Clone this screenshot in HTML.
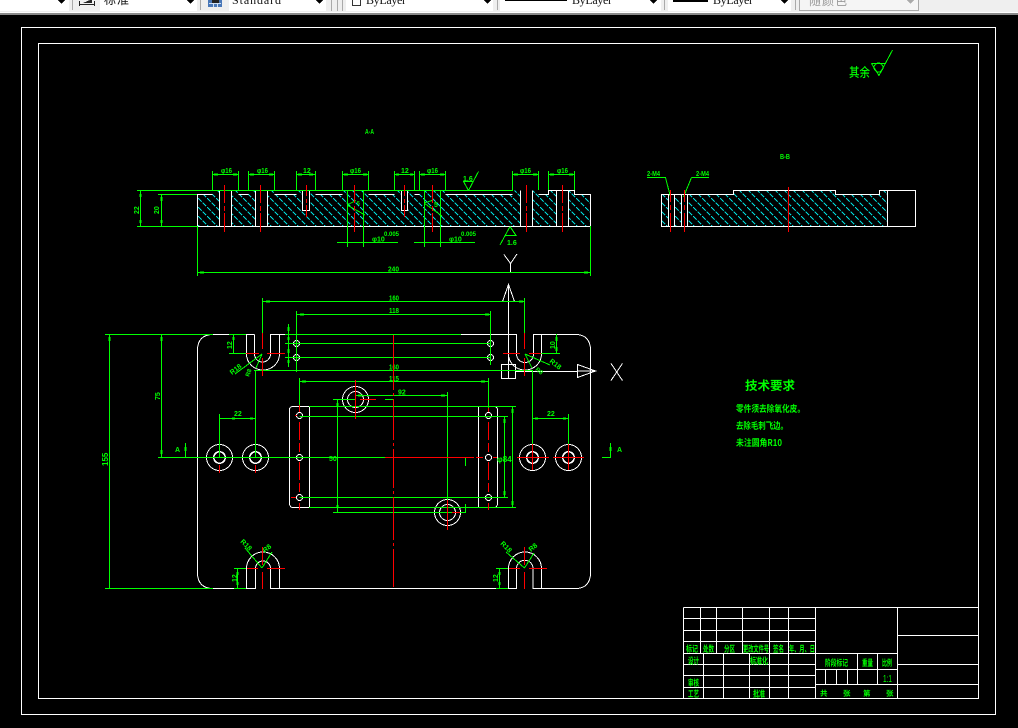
<!DOCTYPE html>
<html><head><meta charset="utf-8"><title>CAD</title>
<style>
html,body{margin:0;padding:0;background:#000;width:1018px;height:728px;overflow:hidden}
svg{display:block;position:absolute;left:0;top:0}
.g{fill:#0f0;font-family:"Liberation Sans","Noto Sans CJK SC",sans-serif;font-weight:700}
.c{fill:#0f0;font-family:"Noto Sans CJK SC","WenQuanYi Zen Hei",sans-serif;font-weight:700}
.t{fill:#111;font-family:"Liberation Serif","Noto Sans CJK SC",serif;font-size:12px}
</style></head><body>
<svg width="1018" height="728" viewBox="0 0 1018 728" xmlns="http://www.w3.org/2000/svg" shape-rendering="crispEdges">
<defs>
<pattern id="h" patternUnits="userSpaceOnUse" width="9" height="9"><path d="M0 0L9 9" stroke="#00dcdc" stroke-width="1" stroke-dasharray="5 1.400" fill="none"/></pattern>
</defs>
<rect width="1018" height="728" fill="#000"/>
<!-- toolbar -->
<rect width="1018" height="13" fill="#efefef"/>
<rect y="12" width="1018" height="1" fill="#fff"/>
<rect y="13" width="1018" height="2" fill="#8a8a8a"/>
<g fill="#fff">
<rect x="0" width="69" height="11"/><rect x="100" width="97" height="11"/><rect x="229" width="97" height="11"/><rect x="346" width="147" height="11"/><rect x="500" width="161" height="11"/><rect x="668" width="123" height="11"/>
</g>
<rect x="800" width="118" height="11" fill="#f5f5f5"/>
<path d="M72.500 0V10M200.500 0V10M331.500 0V11M337.500 0V11M342.500 0V11M497.500 0V10M664.500 0V10M795.500 0V10M799.500 0V11M918.500 0V11" stroke="#aaa" fill="none"/>
<path d="M800 10.500H918.500" stroke="#aaa" fill="none"/>
<path d="M58 0h7l-3.500 4zM187 0h7l-3.500 4zM316 0h7l-3.500 4zM484 0h7l-3.500 4zM650 0h7l-3.500 4zM781 0h7l-3.500 4z" fill="#000"/>
<path d="M907 0h7l-3.500 4z" fill="#aaa"/>
<path d="M79.500 1V6M94.500 1V6M80 4.500H94" stroke="#222" fill="none"/>
<path d="M83 3L90 0H92V3Z" fill="#222"/>
<rect x="208" y="0" width="14" height="7" fill="#4a78b8"/>
<path d="M209 3.500H221M213.500 0V7M217.500 0V7" stroke="#cfe0f5" fill="none"/>
<rect x="212" y="0" width="7" height="3" fill="#222"/>
<path d="M352.500 -1V5.500H360.500V-1" stroke="#333" fill="none"/>
<rect x="505" y="0" width="62" height="1" fill="#000"/>
<rect x="673" y="0" width="35" height="2" fill="#000"/>
<text x="104" y="4" class="t" style="letter-spacing:1px">标准</text>
<text x="232" y="4" class="t" textLength="49">Standard</text>
<text x="366" y="4" class="t" textLength="40">ByLayer</text>
<text x="572" y="4" class="t" textLength="40">ByLayer</text>
<text x="713" y="4" class="t" textLength="40">ByLayer</text>
<text x="809" y="5" class="t" style="fill:#999;letter-spacing:1px">随颜色</text>

<!-- frames -->
<rect x="21.500" y="27.500" width="974" height="687" fill="none" stroke="#fff"/>
<rect x="38.500" y="43.500" width="940" height="655" fill="none" stroke="#fff"/>

<!-- hatching -->
<path d="M197.500 194H212.500V190.500H238.500V194H248.500V190.500H274.500V194H296.500V190.500H315.500V194H342.500V190.500H368.500V194H394.500V190.500H414.500V194H419.500V190.500H445.500V194H512.500V190.500H538.500V194H548.500V190.500H574.500V194H590.500V226.500H197.500Z" fill="url(#h)"/>
<path d="M661.500 194.500H733.500V190.500H835.500V194.500H879.500V190.500H887.500V226.500H661.500Z" fill="url(#h)"/>
<g fill="#000">
<rect x="219" y="190" width="13" height="36"/><rect x="255" y="190" width="13" height="36"/><rect x="302" y="190" width="8" height="21"/><rect x="401" y="190" width="7" height="21"/><rect x="520" y="190" width="12" height="36"/><rect x="556" y="190" width="12" height="36"/>
<rect x="668" y="191" width="7" height="35"/><rect x="681" y="191" width="7" height="35"/>
</g>

<!-- white geometry -->
<g fill="none" stroke="#fff">
<path d="M197.500 226.500H590.500V194.500H574.500V190.500H548.500V194.500H538.500M512.500 194.500H445.500M419.500 194.500H414.500M394.500 194.500H368.500M342.500 194.500H315.500M296.500 194.500H274.500M248.500 194.500H238.500M212.500 194.500H197.500V226.500"/>
<path d="M219.500 190.500V226.500M231.500 190.500V226.500M255.500 190.500V226.500M267.500 190.500V226.500M520.500 190.500V226.500M532.500 190.500V226.500M556.500 190.500V226.500M568.500 190.500V226.500"/>
<path d="M302.500 190.500V210.500H309.500V190.500M401.500 190.500V210.500H407.500V190.500"/>
<path d="M661.500 194.500H733.500V190.500H835.500V194.500H879.500V190.500H915.500V226.500H661.500Z"/>
<path d="M887.500 190.500V226.500M668.500 194.500V226.500M674.500 194.500V226.500M681.500 194.500V226.500M687.500 194.500V226.500"/>
<!-- plate -->
<path d="M213 334.500C203 334.500 197.500 340 197.500 350V573C197.500 583 203 588.500 213 588.500H255.500V568.500A7.500 7.500 0 0 1 270.500 568.500V588.500H516.500V568.500A8 8 0 0 1 533 568.500V588.500H576C585 588.500 590.500 583 590.500 573V350C590.500 340 585 334.500 576 334.500H533.500V354A8.500 8.500 0 0 1 516.500 354V334.500H461M254.500 334.500V354A8 8 0 0 0 270.500 354V334.500H285M254.500 334.500H246.500V354A16.500 16 0 0 0 279.500 354V334.500M213 334.500H229"/>
<path d="M508.500 334.500H516.500M508.500 334.500V354A16.500 16 0 0 0 541.500 354V334.500H533.500"/>
<path d="M246.500 588.500V568.500A16.500 16.500 0 0 1 279.500 568.500V588.500M508.500 588.500V568.500A16.500 16.500 0 0 1 541.500 568.500V588.500"/>
<!-- holes -->
<circle cx="219.500" cy="457.500" r="13"/><circle cx="219.500" cy="457.500" r="6"/><circle cx="219.500" cy="457.500" r="5.500"/>
<circle cx="255.500" cy="457.500" r="13"/><circle cx="255.500" cy="457.500" r="6"/><circle cx="255.500" cy="457.500" r="5.500"/>
<circle cx="532.500" cy="457.500" r="13"/><circle cx="532.500" cy="457.500" r="6"/><circle cx="532.500" cy="457.500" r="5.500"/>
<circle cx="568.500" cy="457.500" r="13"/><circle cx="568.500" cy="457.500" r="6"/><circle cx="568.500" cy="457.500" r="5.500"/>
<circle cx="355.500" cy="399.500" r="13"/><circle cx="355.500" cy="399.500" r="8"/>
<circle cx="447.500" cy="512.500" r="13"/><circle cx="447.500" cy="512.500" r="8"/>
<circle cx="296.500" cy="343.500" r="3"/><circle cx="296.500" cy="357.500" r="3"/><circle cx="490.500" cy="343.500" r="3"/><circle cx="490.500" cy="357.500" r="3"/>
<circle cx="299.500" cy="415.500" r="3"/><circle cx="299.500" cy="457.500" r="3"/><circle cx="299.500" cy="497.500" r="3"/>
<circle cx="488.500" cy="415.500" r="3"/><circle cx="488.500" cy="457.500" r="3"/><circle cx="488.500" cy="497.500" r="3"/>
<!-- centre slotted plate -->
<path d="M309.500 406.500H293C290.500 406.500 289.500 408 289.500 410V503C289.500 506 290.500 507.500 293 507.500H309.500V406.500"/>
<path d="M478.500 406.500V507.500H494C496.500 507.500 497.500 506 497.500 503V410C497.500 408 496.500 406.500 494 406.500H478.500"/>
<!-- axes -->
<path d="M504 254.500L510.500 263.500L517 254M510.500 263.500V272"/>
<path d="M508.500 301V378M502.500 301.500H514.500L508.500 284.500ZM508.500 285V301M501.500 364.500H515.500V378.500H501.500ZM515 371.500H577.500"/>
<path d="M577.500 364.500V377.500L595.500 371ZM578 371H595"/>
<path d="M611 363.500L622.500 380.500M622.500 363.500L611 380.500"/>
</g>

<!-- green lines -->
<g fill="none" stroke="#0f0">
<path d="M137 190.500H513M137 226.500H197M158 194.500H197M140.500 190V226M161.500 194V226"/>
<path d="M197.500 226V276M590.500 226V276M197.500 272.500H590.500"/>
<path d="M212.500 171V190M238.500 171V190M248.500 171V190M274.500 171V190M296.500 171V190M315.500 171V190M342.500 171V190M368.500 171V190M394.500 171V190M414.500 171V190M419.500 171V190M445.500 171V190M512.500 171V190M538.500 171V190M548.500 171V190M574.500 171V190"/>
<path d="M212 174.500H239M248 174.500H275M296 174.500H316M342 174.500H369M394 174.500H415M419 174.500H446M512 174.500H539M548 174.500H575"/>
<path d="M347.500 190V247M363.500 190V247M337 242.500H398M424.500 190V247M440.500 190V247M414 242.500H475"/>
<path d="M347 205L365 215M347 205L356 200.500M424 203L442 216M424 203L432 200.500"/>
<path d="M478.500 171.500L468.500 190.500L463.500 181.500H473.500" />
<path d="M510 226.500L500 245M510 226.500L516 235.500H505" />
<path d="M647 177.500H665.500L670.500 197M691.500 177.500H709M691.500 177.500L683.500 197"/>
<!-- plan dims -->
<path d="M105 334.500H213M229 334.500H246M285 334.500H461M105 588.500H213M109.500 334V588M161.500 334V457"/>
<path d="M158 457.500H385M262.500 298V334M524.500 298V333M262.500 301.500H524.500M296.500 311V372M490.500 311V365M296.500 314.500H490.500"/>
<path d="M285 343.500H491M285 357.500H491M288.500 324V367M254 370.500H532M255.500 370V457M532.500 370V457"/>
<path d="M233.500 334V353M229 353.500H246M556.500 334V354M541 353.500H560"/>
<path d="M262 354L235 374M262 354L256 368M525 354L550 365M525 354L532 368"/>
<path d="M299.500 378V405M488.500 378V408M299 381.500H488"/>
<path d="M219.500 414V457M568.500 414V457M219.500 418.500H255.500M532.500 418.500H568.500"/>
<path d="M309 406.500H516M309 507.500H516M299.500 416.500H508M299.500 497.500H508M504.500 416V498M512.500 406V507"/>
<path d="M355.500 395.500H447.500M447.500 392V512M333 399.500H355M337.500 400V512M333 512.500H460M385 399.500H393"/>
<path d="M465 457.500H474M465.500 457V466M460 512.500H465.500V504"/>
<path d="M185.500 443V457M602 457.500H610.500V443"/>
<path d="M234 568.500H246M234 588.500H246M237.500 568V588M496 568.500H508M496 588.500H508M499.500 568V588"/>
<path d="M262 568L245 548M262 568L272 552M524.500 568L506 552M524.500 568L534 553"/>
</g>
<!-- dim ticks -->
<path fill="none" stroke="#0f0" stroke-width="2" d="M214 174.500h4M233 174.500h4M250 174.500h4M269 174.500h4M298 174.500h4M309 174.500h4M344 174.500h4M363 174.500h4M396 174.500h3M410 174.500h3M421 174.500h4M440 174.500h4M514 174.500h4M533 174.500h4M550 174.500h4M569 174.500h4M200 272.500h4M584 272.500h4M266 301.500h4M519 301.500h4M300 314.500h4M485 314.500h4M232 418.500h3M250 418.500h3M535 418.500h3M563 418.500h3M302 381.500h4M481 381.500h4M358 395.500h4M441 395.500h4"/>
<path fill="none" stroke="#0f0" stroke-width="2" d="M140.500 194v3M140.500 220v3M161.500 197v4M161.500 220v3M109.500 337v4M161.500 337v4M161.500 450v4M288.500 327v4M288.500 337v3M288.500 349v4M288.500 360v3M233.500 337v3M556.500 337v4M556.500 347v4M504.500 419v4M504.500 491v4M512.500 409v4M512.500 501v4M337.500 403v3M337.500 505v3M237.500 572v3M237.500 582v3M499.500 572v3M499.500 582v3M185.500 447v4M610.500 447v4"/>

<!-- green text -->
<g class="g" font-size="7">
<text x="221" y="173" textLength="11" lengthAdjust="spacingAndGlyphs">φ16</text><text x="257" y="173" textLength="11" lengthAdjust="spacingAndGlyphs">φ16</text><text x="303" y="173">12</text><text x="350" y="173" textLength="11" lengthAdjust="spacingAndGlyphs">φ16</text><text x="401" y="173">12</text><text x="427" y="173" textLength="11" lengthAdjust="spacingAndGlyphs">φ16</text><text x="520" y="173" textLength="11" lengthAdjust="spacingAndGlyphs">φ16</text><text x="557" y="173" textLength="11" lengthAdjust="spacingAndGlyphs">φ16</text>
<text x="388" y="271.500" textLength="11" lengthAdjust="spacingAndGlyphs">240</text>
<text x="372" y="241.500">φ10</text><text x="384" y="236" font-size="6">0.005</text>
<text x="449" y="241.500">φ10</text><text x="461" y="236" font-size="6">0.005</text>
<text x="463" y="181" font-size="7">1.6</text><text x="507" y="245" font-size="7">1.6</text>
<text x="357" y="205" font-size="5">5</text><text x="434" y="207" font-size="7">5</text>
<text x="647" y="176" textLength="13" lengthAdjust="spacingAndGlyphs">2-M4</text><text x="696" y="176" textLength="13" lengthAdjust="spacingAndGlyphs">2-M4</text>
<text x="365" y="134" textLength="9" lengthAdjust="spacingAndGlyphs">A-A</text><text x="780" y="159" textLength="10" lengthAdjust="spacingAndGlyphs">B-B</text>
<text x="389" y="300.500" textLength="10" lengthAdjust="spacingAndGlyphs">160</text><text x="389" y="313" textLength="10" lengthAdjust="spacingAndGlyphs">118</text><text x="389" y="369.500" textLength="10" lengthAdjust="spacingAndGlyphs">160</text><text x="389" y="381" textLength="10" lengthAdjust="spacingAndGlyphs">115</text>
<text x="398" y="394.500" font-size="7">92</text><text x="329" y="461" font-size="7">50</text>
<text x="234" y="416">22</text><text x="547" y="416">22</text>
<text x="497" y="462" font-size="8">φ84</text>
<text x="175" y="452" font-size="7">A</text><text x="617" y="452" font-size="7">A</text>
<text transform="translate(143,214) rotate(-90)" x="0" y="-4" font-size="7">22</text>
<text transform="translate(163,214) rotate(-90)" x="0" y="-4" font-size="7">20</text>
<text transform="translate(109,466) rotate(-90)" x="0" y="-1" font-size="8">155</text>
<text transform="translate(160,400) rotate(-90)" x="0" y="0" font-size="7">75</text>
<text transform="translate(232,349) rotate(-90)" x="0" y="0" font-size="7">12</text>
<text transform="translate(555,349) rotate(-90)" x="0" y="0" font-size="7">10</text>
<text transform="translate(237,582) rotate(-90)" x="0" y="0" font-size="7">12</text>
<text transform="translate(498,582) rotate(-90)" x="0" y="0" font-size="7">12</text>
<text transform="translate(232,375) rotate(-38)" font-size="7">R18</text>
<text transform="translate(249,377) rotate(-70)" font-size="6">R8</text>
<text transform="translate(549,362) rotate(38)" font-size="7">R18</text>
<text transform="translate(535,370) rotate(40)" font-size="6">R8</text>
<text transform="translate(240,542) rotate(45)" font-size="7">R18</text>
<text transform="translate(265,553) rotate(-40)" font-size="7">R8</text>
<text transform="translate(500,544) rotate(45)" font-size="7">R18</text>
<text transform="translate(531,552) rotate(-40)" font-size="7">R8</text>
</g>

<!-- notes -->
<g class="c" text-rendering="geometricPrecision">
<text x="745" y="390" font-size="12.500">技术要求</text>
<text x="736" y="412" font-size="9.500" textLength="69" lengthAdjust="spacingAndGlyphs">零件须去除氧化皮。</text>
<text x="736" y="429" font-size="9.500" textLength="52" lengthAdjust="spacingAndGlyphs">去除毛刺飞边。</text>
<text x="736" y="446" font-size="9.500" textLength="46" lengthAdjust="spacingAndGlyphs">未注圆角R10</text>
<text x="849" y="77" font-size="13" textLength="21" lengthAdjust="spacingAndGlyphs" style="font-weight:500">其余</text>
</g>
<g fill="none" stroke="#0f0"><circle cx="878.500" cy="67.500" r="4.500"/><path d="M871.500 63.500H885M871.500 63.500L879 75.500L892.500 50"/></g>

<!-- red -->
<g fill="none" stroke="#f00">
<path d="M224.500 185V203M224.500 206V211M224.500 213V232M260.500 185V203M260.500 206V211M260.500 213V232M354.500 185V203M354.500 206V211M354.500 213V232M432.500 185V203M432.500 206V211M432.500 213V232M526.500 185V203M526.500 206V211M526.500 213V232M562.500 185V203M562.500 206V211M562.500 213V232"/>
<path d="M306.500 185V196M306.500 199V203M306.500 205V217M404.500 185V196M404.500 199V203M404.500 205V217"/>
<path d="M670.500 190V202M670.500 205V210M670.500 213V232M684.500 190V202M684.500 205V210M684.500 213V232M788.500 187V232"/>
<path d="M262.500 333V349M262.500 358V376M246 353.500H259M267 353.500H285M524.500 333V349M524.500 358V376M503 353.500H520M529 353.500H541"/>
<path d="M393.500 335V390M393.500 393V396M393.500 399V440M393.500 443V446M393.500 449V488M393.500 491V494M393.500 497V540M393.500 543V546M393.500 549V587"/>
<path d="M385 457.500H474M476 457.500H483M493 457.500H497"/>
<path d="M299.500 405V412M299.500 422V440M299.500 443V452M299.500 462V480M299.500 483V492M299.500 503V510M295 415.500H297M291 497.500H296M488.500 408V412M488.500 422V440M488.500 443V452M488.500 462V480M488.500 483V492M488.500 503V510"/>
<path d="M219.500 465V473M255.500 465V473M532.500 444V470M568.500 444V470M517 457.500H549M553 457.500H584"/>
<path d="M355.500 380V419M360 399.500H376M447.500 500V530M452 512.500H460"/>
<path d="M262.500 547V565M262.500 572V589M247 568.500H258M267 568.500H285M524.500 547V565M524.500 572V589M509 568.500H520M529 568.500H547"/>
</g>

<!-- title block -->
<g fill="none" stroke="#fff">
<path d="M683.500 607.500H978.500M683.500 618.500H815.500M683.500 630.500H815.500M683.500 641.500H815.500M683.500 653.500H897.500M683.500 664.500H815.500M683.500 675.500H815.500M683.500 687.500H815.500M683.500 698.500H978.500"/>
<path d="M683.500 607.500V698.500M700.500 607.500V653.500M716.500 607.500V653.500M742.500 607.500V653.500M769.500 607.500V698.500M788.500 607.500V698.500M815.500 607.500V698.500M897.500 607.500V698.500M978.500 607.500V698.500"/>
<path d="M703.500 653.500V698.500M723.500 653.500V698.500M749.500 653.500V698.500"/>
<path d="M815.500 669.500H897.500M815.500 684.500H978.500M897.500 635.500H978.500M897.500 664.500H978.500"/>
<path d="M857.500 653.500V684.500M877.500 653.500V684.500M825.500 669.500V684.500M836.500 669.500V684.500M847.500 669.500V684.500"/>
</g>
<g class="c" font-size="9" text-rendering="geometricPrecision">
<text x="686" y="652" textLength="12" lengthAdjust="spacingAndGlyphs">标记</text><text x="703" y="652" textLength="11" lengthAdjust="spacingAndGlyphs">处数</text><text x="724" y="652" textLength="11" lengthAdjust="spacingAndGlyphs">分区</text><text x="743" y="652" textLength="26" lengthAdjust="spacingAndGlyphs">更改文件号</text><text x="773" y="652" textLength="11" lengthAdjust="spacingAndGlyphs">签名</text><text x="789" y="652" textLength="26" lengthAdjust="spacingAndGlyphs">年、月、日</text>
<text x="688" y="664" textLength="11" lengthAdjust="spacingAndGlyphs">设计</text><text x="750" y="664" textLength="18" lengthAdjust="spacingAndGlyphs">标准化</text>
<text x="688" y="686" textLength="11" lengthAdjust="spacingAndGlyphs">审核</text><text x="688" y="697" textLength="11" lengthAdjust="spacingAndGlyphs">工艺</text><text x="753" y="697" textLength="12" lengthAdjust="spacingAndGlyphs">批准</text>
<text x="825" y="666" textLength="23" lengthAdjust="spacingAndGlyphs">阶段标记</text><text x="862" y="666" textLength="11" lengthAdjust="spacingAndGlyphs">重量</text><text x="882" y="666" textLength="10" lengthAdjust="spacingAndGlyphs">比例</text>
<text x="820" y="696" font-size="7.500">共</text><text x="843" y="696" font-size="7.500">张</text><text x="863" y="696" font-size="7.500">第</text><text x="886" y="696" font-size="7.500">张</text>
</g>
<text x="883" y="682" class="g" style="font-weight:400" font-size="10" textLength="9" lengthAdjust="spacingAndGlyphs">1:1</text>
</svg>
</body></html>
